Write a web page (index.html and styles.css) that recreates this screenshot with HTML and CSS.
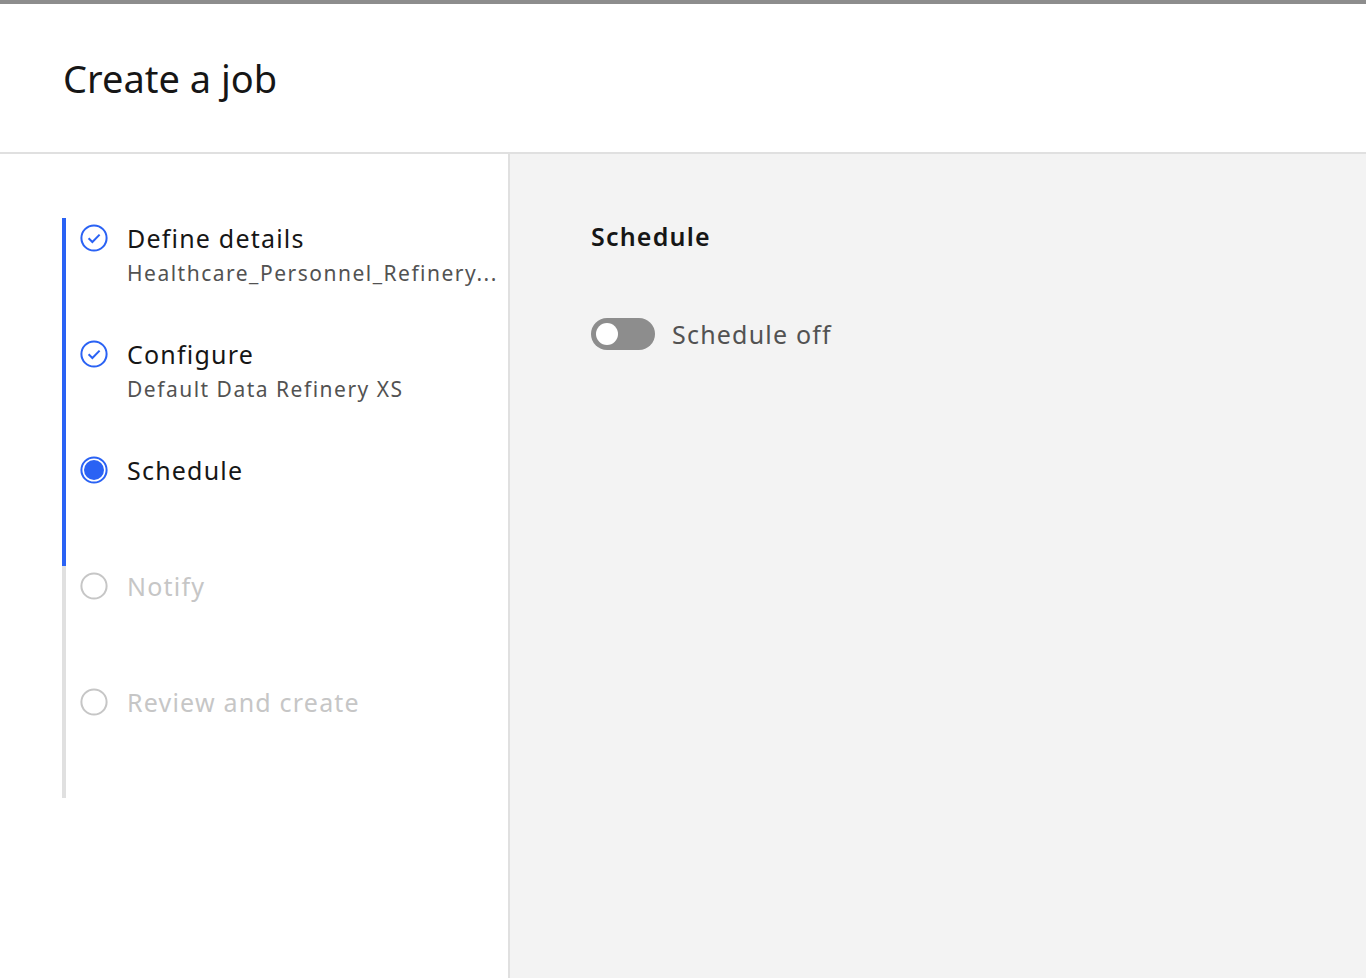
FILE: index.html
```html
<!DOCTYPE html>
<html lang="en">
<head>
<meta charset="utf-8">
<title>Create a job</title>
<link rel="stylesheet" href="styles.css">
</head>
<body>
<div class="topbar"></div>
<header class="header">
  <h1 class="title">Create a job</h1>
</header>
<main class="main">
  <nav class="sidebar">
    <ol class="steps">
      <li class="step step--complete">
        <svg class="step__icon" viewBox="0 0 28 28" width="28" height="28" aria-hidden="true">
          <circle cx="14" cy="14" r="12.6" fill="none" stroke="#2a62f4" stroke-width="2"/>
          <path d="M8.6 14.2 L12.4 18 L19.6 10.6" fill="none" stroke="#2a62f4" stroke-width="2"/>
        </svg>
        <div class="step__text">
          <div class="step__label">Define details</div>
          <div class="step__sub">Healthcare_Personnel_Refinery...</div>
        </div>
      </li>
      <li class="step step--complete">
        <svg class="step__icon" viewBox="0 0 28 28" width="28" height="28" aria-hidden="true">
          <circle cx="14" cy="14" r="12.6" fill="none" stroke="#2a62f4" stroke-width="2"/>
          <path d="M8.6 14.2 L12.4 18 L19.6 10.6" fill="none" stroke="#2a62f4" stroke-width="2"/>
        </svg>
        <div class="step__text">
          <div class="step__label">Configure</div>
          <div class="step__sub">Default Data Refinery XS</div>
        </div>
      </li>
      <li class="step step--current">
        <svg class="step__icon" viewBox="0 0 28 28" width="28" height="28" aria-hidden="true">
          <circle cx="14" cy="14" r="12.6" fill="none" stroke="#2a62f4" stroke-width="2"/>
          <circle cx="14" cy="14" r="10" fill="#2a62f4"/>
        </svg>
        <div class="step__text">
          <div class="step__label">Schedule</div>
        </div>
      </li>
      <li class="step step--incomplete">
        <svg class="step__icon" viewBox="0 0 28 28" width="28" height="28" aria-hidden="true">
          <circle cx="14" cy="14" r="12.6" fill="none" stroke="#c6c6c6" stroke-width="2"/>
        </svg>
        <div class="step__text">
          <div class="step__label">Notify</div>
        </div>
      </li>
      <li class="step step--incomplete">
        <svg class="step__icon" viewBox="0 0 28 28" width="28" height="28" aria-hidden="true">
          <circle cx="14" cy="14" r="12.6" fill="none" stroke="#c6c6c6" stroke-width="2"/>
        </svg>
        <div class="step__text">
          <div class="step__label">Review and create</div>
        </div>
      </li>
    </ol>
  </nav>
  <section class="content">
    <h2 class="content__heading">Schedule</h2>
    <label class="toggle">
      <span class="toggle__track"><span class="toggle__knob"></span></span>
      <span class="toggle__text">Schedule off</span>
    </label>
  </section>
</main>
</body>
</html>
```

FILE: styles.css
```css
* { box-sizing: border-box; }
html, body { margin: 0; padding: 0; }
body {
  font-family: "Noto Sans", "Open Sans", sans-serif;
  color: #161616;
  background: #ffffff;
  height: 978px;
  display: flex;
  flex-direction: column;
}
.topbar {
  height: 4px;
  background: #8d8d8d;
  flex: none;
}
.header {
  height: 150px;
  flex: none;
  border-bottom: 2px solid #e0e0e0;
  padding: 50px 0 0 63px;
}
.title {
  margin: 0;
  font-size: 38px;
  font-weight: 400;
  line-height: 48px;
  color: #161616;
}
.main {
  flex: 1;
  display: flex;
  min-height: 0;
}
.sidebar {
  width: 510px;
  flex: none;
  border-right: 2px solid #e0e0e0;
  padding: 64px 0 0 62px;
}
.steps {
  list-style: none;
  margin: 0;
  padding: 0;
}
.step {
  height: 116px;
  display: flex;
  align-items: flex-start;
  border-left: 4px solid #2a62f4;
  padding: 6px 0 0 14px;
}
.step--incomplete { border-left-color: #e0e0e0; }
.step__icon { flex: none; }
.step__text {
  margin-left: 19px;
  min-width: 0;
  flex: 1;
}
.step__label {
  font-size: 25px;
  letter-spacing: 1.2px;
  line-height: 28px;
  color: #161616;
}
.step--incomplete .step__label { color: #c6c6c6; }
.step__sub {
  margin-top: 8px;
  font-size: 21px;
  line-height: 26px;
  color: #525252;
  letter-spacing: 1.5px;
  white-space: nowrap;
}
.content {
  flex: 1;
  background: #f3f3f3;
  padding: 66px 0 0 81px;
}
.content__heading {
  margin: 0;
  font-size: 25px;
  letter-spacing: 1.2px;
  line-height: 32px;
  font-weight: 600;
  color: #161616;
}
.toggle {
  display: flex;
  align-items: center;
  margin-top: 65px;
}
.toggle__track {
  width: 64px;
  height: 32px;
  border-radius: 16px;
  background: #8d8d8d;
  position: relative;
  flex: none;
}
.toggle__knob {
  position: absolute;
  left: 5px;
  top: 5px;
  width: 22px;
  height: 22px;
  border-radius: 50%;
  background: #ffffff;
}
.toggle__text {
  margin-left: 17px;
  font-size: 25px;
  letter-spacing: 1.2px;
  color: #525252;
}
```
